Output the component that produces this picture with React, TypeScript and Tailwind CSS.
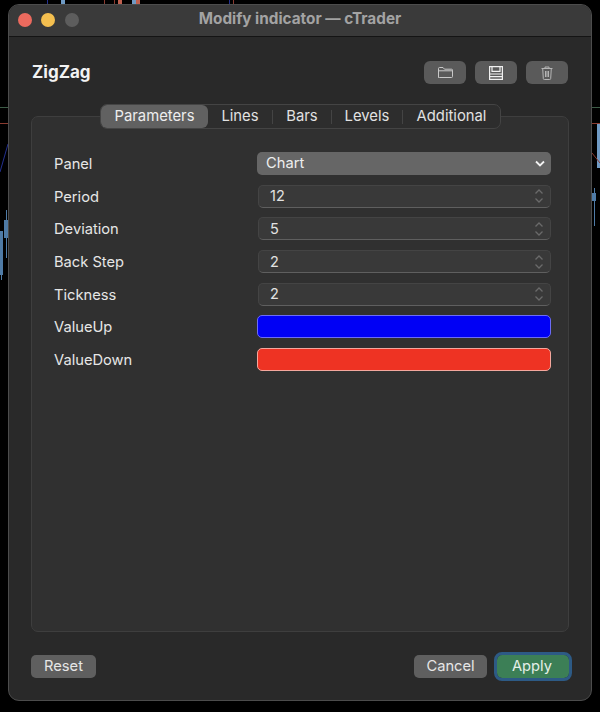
import React from "react"

const font = { fontFamily: '"Inter", "Liberation Sans", sans-serif' }

const tabs = ["Parameters", "Lines", "Bars", "Levels", "Additional"]

const Stepper = () => (
  <svg width="10" height="16" viewBox="0 0 10 16" fill="none" stroke="#6a6a6a" strokeWidth="1.3">
    <path d="M1.5 5.500 5 2l3.500 3.500" />
    <path d="M1.5 10.500 5 14l3.500-3.500" />
  </svg>
)

const Row = ({ label, children }: { label: string; children: React.ReactNode }) => (
  <div className="flex h-[23px] items-center justify-between">
    <span className="pt-[1px] text-[14.7px] text-[#e6e6e6]">{label}</span>
    {children}
  </div>
)

const NumberField = ({ value }: { value: string }) => (
  <div className="flex h-[23px] w-[293px] items-center justify-between rounded-[5px] border border-[#444444] border-b-[#5f5f5f] bg-[#393939] pl-[11px] pr-[6px] text-[14.5px] text-[#e2e2e2]">
    <span>{value}</span>
    <Stepper />
  </div>
)

const IconButton = ({ children }: { children: React.ReactNode }) => (
  <button className="flex h-[23px] w-[42px] items-center justify-center rounded-[6px] bg-[#5a5a5a]">{children}</button>
)

export default function App() {
  return (
    <div style={font} className="relative h-[712px] w-[600px] overflow-hidden bg-black">
      {/* chart showing behind the window */}
      <div className="absolute left-[47px] top-0 h-[4px] w-px bg-[#23308f]" />
      <div className="absolute left-[61px] top-0 h-[4px] w-[4px] bg-[#6f9ac4]" />
      <div className="absolute left-[104px] top-0 h-[4px] w-px bg-[#8a3b30]" />
      <div className="absolute left-[114px] top-0 h-[4px] w-px bg-[#8a3b30]" />
      <div className="absolute left-[118px] top-0 h-[4px] w-[4px] bg-[#c0604f]" />
      <div className="absolute left-[132px] top-0 h-[4px] w-[4px] bg-[#6f9ac4]" />
      <div className="absolute left-[136px] top-0 h-[4px] w-[4px] bg-[#c0604f]" />
      <div className="absolute left-[229px] top-0 h-[4px] w-px bg-[#23308f]" />
      <div className="absolute left-[233px] top-0 h-[4px] w-px bg-[#8a3b30]" />
      <div className="absolute left-0 top-[107px] h-px w-[8px] bg-[#3d5c47]" />
      <div className="absolute left-0 top-[123px] h-px w-[8px] bg-[#8a3b30]" />
      <div className="absolute right-0 top-[107px] h-px w-[8px] bg-[#3d5c47]" />
      <div className="absolute right-0 top-[123px] h-px w-[8px] bg-[#8a3b30]" />
      <div className="absolute left-0 top-[231px] h-[44px] w-[3px] bg-[#4f7ba6]" />
      <div className="absolute left-[1px] top-[275px] h-[5px] w-px bg-[#4f7ba6]" />
      <div className="absolute left-[4px] top-[220px] h-[18px] w-[4px] bg-[#4f7ba6]" />
      <div className="absolute left-[6px] top-[210px] h-[48px] w-px bg-[#4f7ba6]" />
      <div className="absolute right-0 top-[124px] h-[44px] w-[3px] bg-[#6f9ac4]" />
      <div className="absolute right-[5px] top-[188px] h-[38px] w-px bg-[#4f7ba6]" />
      <div className="absolute right-[4px] top-[193px] h-[8px] w-[4px] bg-[#4f7ba6]" />
      <svg className="absolute right-0 top-[150px]" width="8" height="16" fill="none" stroke="#8a3b30" strokeWidth="1">
        <path d="M0 3l8 10" />
      </svg>
      <svg className="absolute left-0 top-[140px]" width="8" height="36" fill="none" stroke="#23308f" strokeWidth="1">
        <path d="M0 32 8 4" />
      </svg>

      {/* window */}
      <div className="absolute left-[8px] top-[4px] flex h-[697px] w-[584px] flex-col overflow-hidden rounded-[11px] border border-[#4c4c4c] bg-[#292929]">
        <div className="relative flex h-[32px] shrink-0 items-center justify-center border-b border-[#141414] bg-[#3a3a3a] pb-[2px]">
          <div className="absolute left-[8.500px] flex gap-[9.500px] pt-[1px]">
            <span className="size-[14px] rounded-full bg-[#ec6a5e]" />
            <span className="size-[14px] rounded-full bg-[#f4bf4f]" />
            <span className="size-[14px] rounded-full bg-[#5d5d5d]" />
          </div>
          <span className="text-[15.3px] font-bold text-[#a3a3a3]">Modify indicator — cTrader</span>
        </div>

        <div className="flex flex-1 flex-col px-[22px] pb-[22px]">
          <div className="mt-[24px] flex h-[23px] items-center justify-between pl-[1px] pr-[1px]">
            <span className="text-[17px] font-bold text-[#f2f2f2]">ZigZag</span>
            <div className="flex gap-[9px]">
              <IconButton>
                <svg width="15" height="12" viewBox="0 0 15 12" fill="none" stroke="#c9c9c9" strokeWidth="1">
                  <path d="M.5 10.500V1.500q0-1 1-1h3.500l1.500 1.700h7q1 0 1 1v6.300q0 1-1 1h-12q-1 0-1-1ZM.5 3.800h14" />
                </svg>
              </IconButton>
              <IconButton>
                <svg width="14" height="14" viewBox="0 0 14 14" fill="none" stroke="#f0f0f0" strokeWidth="1.2">
                  <path d="M.6.600h12.800v12.800H.6ZM3 .6v4.800h8V.6M.6 8h12.800M.6 10.700h12.800" />
                </svg>
              </IconButton>
              <IconButton>
                <svg width="12" height="14" viewBox="0 0 12 14" fill="none" stroke="#b5b5b5" strokeWidth="1">
                  <path d="M.5 2.500h11M4 2.500V1h4v1.500M1.700 2.500l.6 10q0 1 1 1h5.400q1 0 1-1l.6-10M4.500 5v6M6 5v6M7.500 5v6" />
                </svg>
              </IconButton>
            </div>
          </div>

          <div className="relative mt-[21px] flex flex-1 flex-col">
            {/* tab strip sits across the panel's top edge */}
            <div className="absolute left-[69px] top-[-1px] z-10 flex h-[25px] w-[401px] items-center rounded-[7px] border border-[#444444] bg-[#2d2d2d] text-[14.8px] text-[#e2e2e2]">
              {tabs.map((t, i) => (
                <React.Fragment key={t}>
                  {i === 0 ? (
                    <span className="flex h-[23px] w-[107px] items-center justify-center rounded-[6px] bg-[#616161] text-[#eeeeee]">{t}</span>
                  ) : (
                    <span className={i === 1 ? "flex w-[64px] justify-center" : i === 2 ? "flex w-[58px] justify-center" : i === 3 ? "flex w-[70px] justify-center" : "flex w-[97px] justify-center"}>{t}</span>
                  )}
                  {i > 0 && i < 4 && <span className="h-[14px] w-px bg-[#444444]" />}
                </React.Fragment>
              ))}
            </div>
            <div className="mt-[11px] flex flex-1 flex-col gap-[9.700px] rounded-[7px] border border-[#3e3e3e] bg-[#303030] pl-[22px] pr-[17px] pt-[35px]">
              <Row label="Panel">
                <div className="flex h-[23px] w-[294px] items-center justify-between rounded-[5px] bg-[#666666] pb-[1px] pl-[9px] pr-[6px] text-[14.7px] text-[#eeeeee]">
                  <span>Chart</span>
                  <svg width="10" height="7" viewBox="0 0 10 7" fill="none" stroke="#f2f2f2" strokeWidth="1.8">
                    <path d="M1 1.500 5 5.500l4-4" />
                  </svg>
                </div>
              </Row>
              <Row label="Period"><NumberField value="12" /></Row>
              <Row label="Deviation"><NumberField value="5" /></Row>
              <Row label="Back Step"><NumberField value="2" /></Row>
              <Row label="Tickness"><NumberField value="2" /></Row>
              <Row label="ValueUp">
                <div className="h-[23px] w-[294px] rounded-[5px] border border-[#6c6cf5] bg-[#0000f5]" />
              </Row>
              <Row label="ValueDown">
                <div className="h-[23px] w-[294px] rounded-[5px] border border-[#f3a79d] bg-[#ee3323]" />
              </Row>
            </div>
          </div>

          <div className="mt-[23px] flex h-[23px] items-center justify-between text-[14.7px]">
            <button className="h-[23px] w-[65px] rounded-[5px] bg-[#5f5f5f] text-[#e6e6e6]">Reset</button>
            <div className="flex items-center gap-[10px]">
              <button className="h-[23px] w-[73px] rounded-[5px] bg-[#5f5f5f] text-[#e6e6e6]">Cancel</button>
              <button className="h-[23px] w-[72px] rounded-[5px] bg-[#3c7f56] pr-[2px] text-[#e6efe8] outline-[3px] outline-[#2d5a85]">Apply</button>
            </div>
          </div>
        </div>
      </div>
    </div>
  )
}
